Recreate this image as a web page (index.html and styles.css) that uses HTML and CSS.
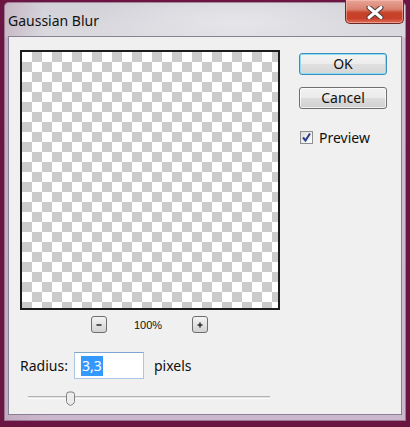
FILE: index.html
```html
<!DOCTYPE html>
<html>
<head>
<meta charset="utf-8">
<link rel="stylesheet" href="styles.css">
</head>
<body>
<div class="window">
  <div class="titlebar">
    <span class="title">Gaussian Blur</span>
    <div class="close">
      <svg width="18" height="13" viewBox="0 0 18 13"><path d="M3 1.5 L15 11.5 M15 1.5 L3 11.5" stroke="#4a3a3a" stroke-width="5" stroke-linecap="round"/><path d="M3 1.5 L15 11.5 M15 1.5 L3 11.5" stroke="#ffffff" stroke-width="3" stroke-linecap="round"/></svg>
    </div>
  </div>
  <div class="content">
    <div class="top">
      <div class="left">
        <div class="canvas"></div>
        <div class="zoomrow">
          <div class="zbtn"><svg width="8" height="8" viewBox="0 0 8 8"><path d="M1.5 4h5" stroke="#333" stroke-width="1.6"/></svg></div>
          <span class="pct">100%</span>
          <div class="zbtn"><svg width="8" height="8" viewBox="0 0 8 8"><path d="M1.5 4h5M4 1.5v5" stroke="#333" stroke-width="1.6"/></svg></div>
        </div>
      </div>
      <div class="side">
        <div class="btn ok">OK</div>
        <div class="btn cancel">Cancel</div>
        <label class="check">
          <span class="box"><svg width="11" height="11" viewBox="0 0 11 11"><path d="M2 5.5 L4.5 8.5 L9 1.5" fill="none" stroke="#2b3e8c" stroke-width="2"/></svg></span>
          <span>Preview</span>
        </label>
      </div>
    </div>
    <div class="radius">
      <span class="lbl">Radius:</span>
      <div class="input"><span class="sel">3,3</span></div>
      <span class="lbl">pixels</span>
    </div>
    <div class="slider">
      <div class="track"></div>
      <svg class="thumb" width="11" height="15" viewBox="0 0 11 15"><path d="M1.5 3.5 a2.5 2.5 0 0 1 2.5 -2.5 h3 a2.5 2.5 0 0 1 2.5 2.5 v7 q0 1.5 -1.5 2.5 l-2.5 1.5 l-2.5 -1.5 q-1.5 -1 -1.5 -2.5 z" fill="#ececec" stroke="#808080" stroke-width="1"/></svg>
    </div>
  </div>
</div>
</body>
</html>
```

FILE: styles.css
```css
html, body {
  margin: 0;
  padding: 0;
}
body {
  width: 410px;
  height: 427px;
  box-sizing: border-box;
  padding: 2px 4px 6px 4px;
  background: #6a1542;
  font-family: "Noto Sans", "Open Sans", sans-serif;
  overflow: hidden;
}
.window {
  width: 402px;
  height: 419px;
  box-sizing: border-box;
  padding: 0 4px 6px 4px;
  background:
    linear-gradient(90deg, rgba(190,160,180,0.55) 0, rgba(205,195,210,0) 40px),
    radial-gradient(ellipse 150px 36px at 58% 20px, #e6e6ea, rgba(230,230,234,0) 100%),
    linear-gradient(180deg, #d2d1d8 0, #d9d9de 34px, #cdbfd0 36px, #cbb8cd 100%);
  border-radius: 5px 5px 0 0;
  box-shadow: inset 0 0 0 1px rgba(110,60,100,0.5);
  display: flex;
  flex-direction: column;
}
.titlebar {
  height: 34px;
  display: flex;
  justify-content: space-between;
  align-items: flex-start;
}
.title {
  margin-top: 9px;
  font-size: 14px;
  color: #111;
}
.close {
  width: 59px;
  height: 24px;
  margin-right: -2px;
  margin-top: -2px;
  box-sizing: border-box;
  border: 1px solid #6b2a2a;
  border-top: none;
  border-radius: 0 0 5px 5px;
  background: linear-gradient(180deg, #e7a597 0, #d98270 40%, #c8432b 55%, #c8402a 80%, #e0705a 100%);
  display: flex;
  align-items: center;
  justify-content: center;
  box-shadow: inset 0 0 0 1px rgba(255,200,190,0.5);
}
.close svg { margin-top: 1px; }
.content {
  flex: 1;
  background: #f0f0f0;
  border: 1px solid #8a8095;
  padding: 13px 0 0 11px;
  display: flex;
  flex-direction: column;
}
.top {
  display: flex;
}
.left {
  width: 260px;
  display: flex;
  flex-direction: column;
}
.canvas {
  width: 260px;
  height: 260px;
  box-sizing: border-box;
  border: 2px solid #1c1c1c;
  background-color: #fff;
  background-image:
    linear-gradient(45deg, #cbcbcb 25%, transparent 25%, transparent 75%, #cbcbcb 75%),
    linear-gradient(45deg, #cbcbcb 25%, transparent 25%, transparent 75%, #cbcbcb 75%);
  background-size: 20px 20px;
  background-position: 0 0, 10px 10px;
}
.zoomrow {
  margin-top: 6px;
  padding-left: 71px;
  display: flex;
  align-items: center;
  height: 17px;
}
.zbtn {
  width: 16px;
  height: 17px;
  box-sizing: border-box;
  border: 1px solid #6e6e6e;
  border-radius: 3px;
  background: linear-gradient(180deg, #f4f4f4, #d2d2d2);
  display: flex;
  align-items: center;
  justify-content: center;
}
.pct {
  width: 30px;
  margin: 0 29px 0 26px;
  font-family: "Liberation Sans", sans-serif;
  font-size: 11px;
  color: #111;
  text-align: center;
}
.side {
  margin-left: 19px;
  display: flex;
  flex-direction: column;
}
.btn {
  width: 88px;
  height: 22px;
  box-sizing: border-box;
  border-radius: 3px;
  border: 1px solid #707070;
  background: linear-gradient(180deg, #f2f2f2 0, #ebebeb 50%, #dddddd 51%, #cfcfcf 100%);
  font-size: 14px;
  line-height: 20px;
  text-align: center;
  color: #111;
  box-shadow: inset 0 0 0 1px rgba(255,255,255,0.7);
}
.ok {
  margin-top: 3px;
  border-color: #3a8fbf;
  box-shadow: inset 0 0 0 1px #8fdcf5;
  background: linear-gradient(180deg, #f4f4f4 0, #ececec 50%, #e0e0e0 51%, #d6d6d6 100%);
}
.cancel {
  margin-top: 12px;
}
.check {
  margin-top: 19px;
  display: flex;
  align-items: center;
  font-size: 14px;
  color: #111;
}
.box {
  width: 13px;
  height: 13px;
  box-sizing: border-box;
  border: 1px solid #8e8f8f;
  background: linear-gradient(135deg, #dcdcdc, #ffffff);
  display: flex;
  align-items: center;
  justify-content: center;
  margin-left: 1px;
  margin-right: 6px;
}
.radius {
  margin-top: 19px;
  display: flex;
  align-items: center;
  height: 27px;
}
.lbl {
  font-size: 14px;
  color: #111;
}
.input {
  width: 70px;
  height: 27px;
  box-sizing: border-box;
  margin: 0 10px 0 6px;
  border: 1px solid #a9c6e6;
  border-top-color: #7ea6d3;
  background: #fff;
  display: flex;
  align-items: center;
  padding-left: 6px;
}
.sel {
  background: #3399ff;
  color: #fff;
  font-size: 14px;
  line-height: 20px;
  padding: 0 1px;
}
.slider {
  position: relative;
  margin-top: 12px;
  height: 15px;
  width: 260px;
}
.track {
  position: absolute;
  left: 8px;
  width: 242px;
  top: 5px;
  height: 3px;
  box-sizing: border-box;
  border-top: 1px solid #b4b4b4;
  background: #e2e2e2;
  border-bottom: 1px solid #fdfdfd;
}
.thumb {
  position: absolute;
  left: 45px;
  top: 0;
}
```
